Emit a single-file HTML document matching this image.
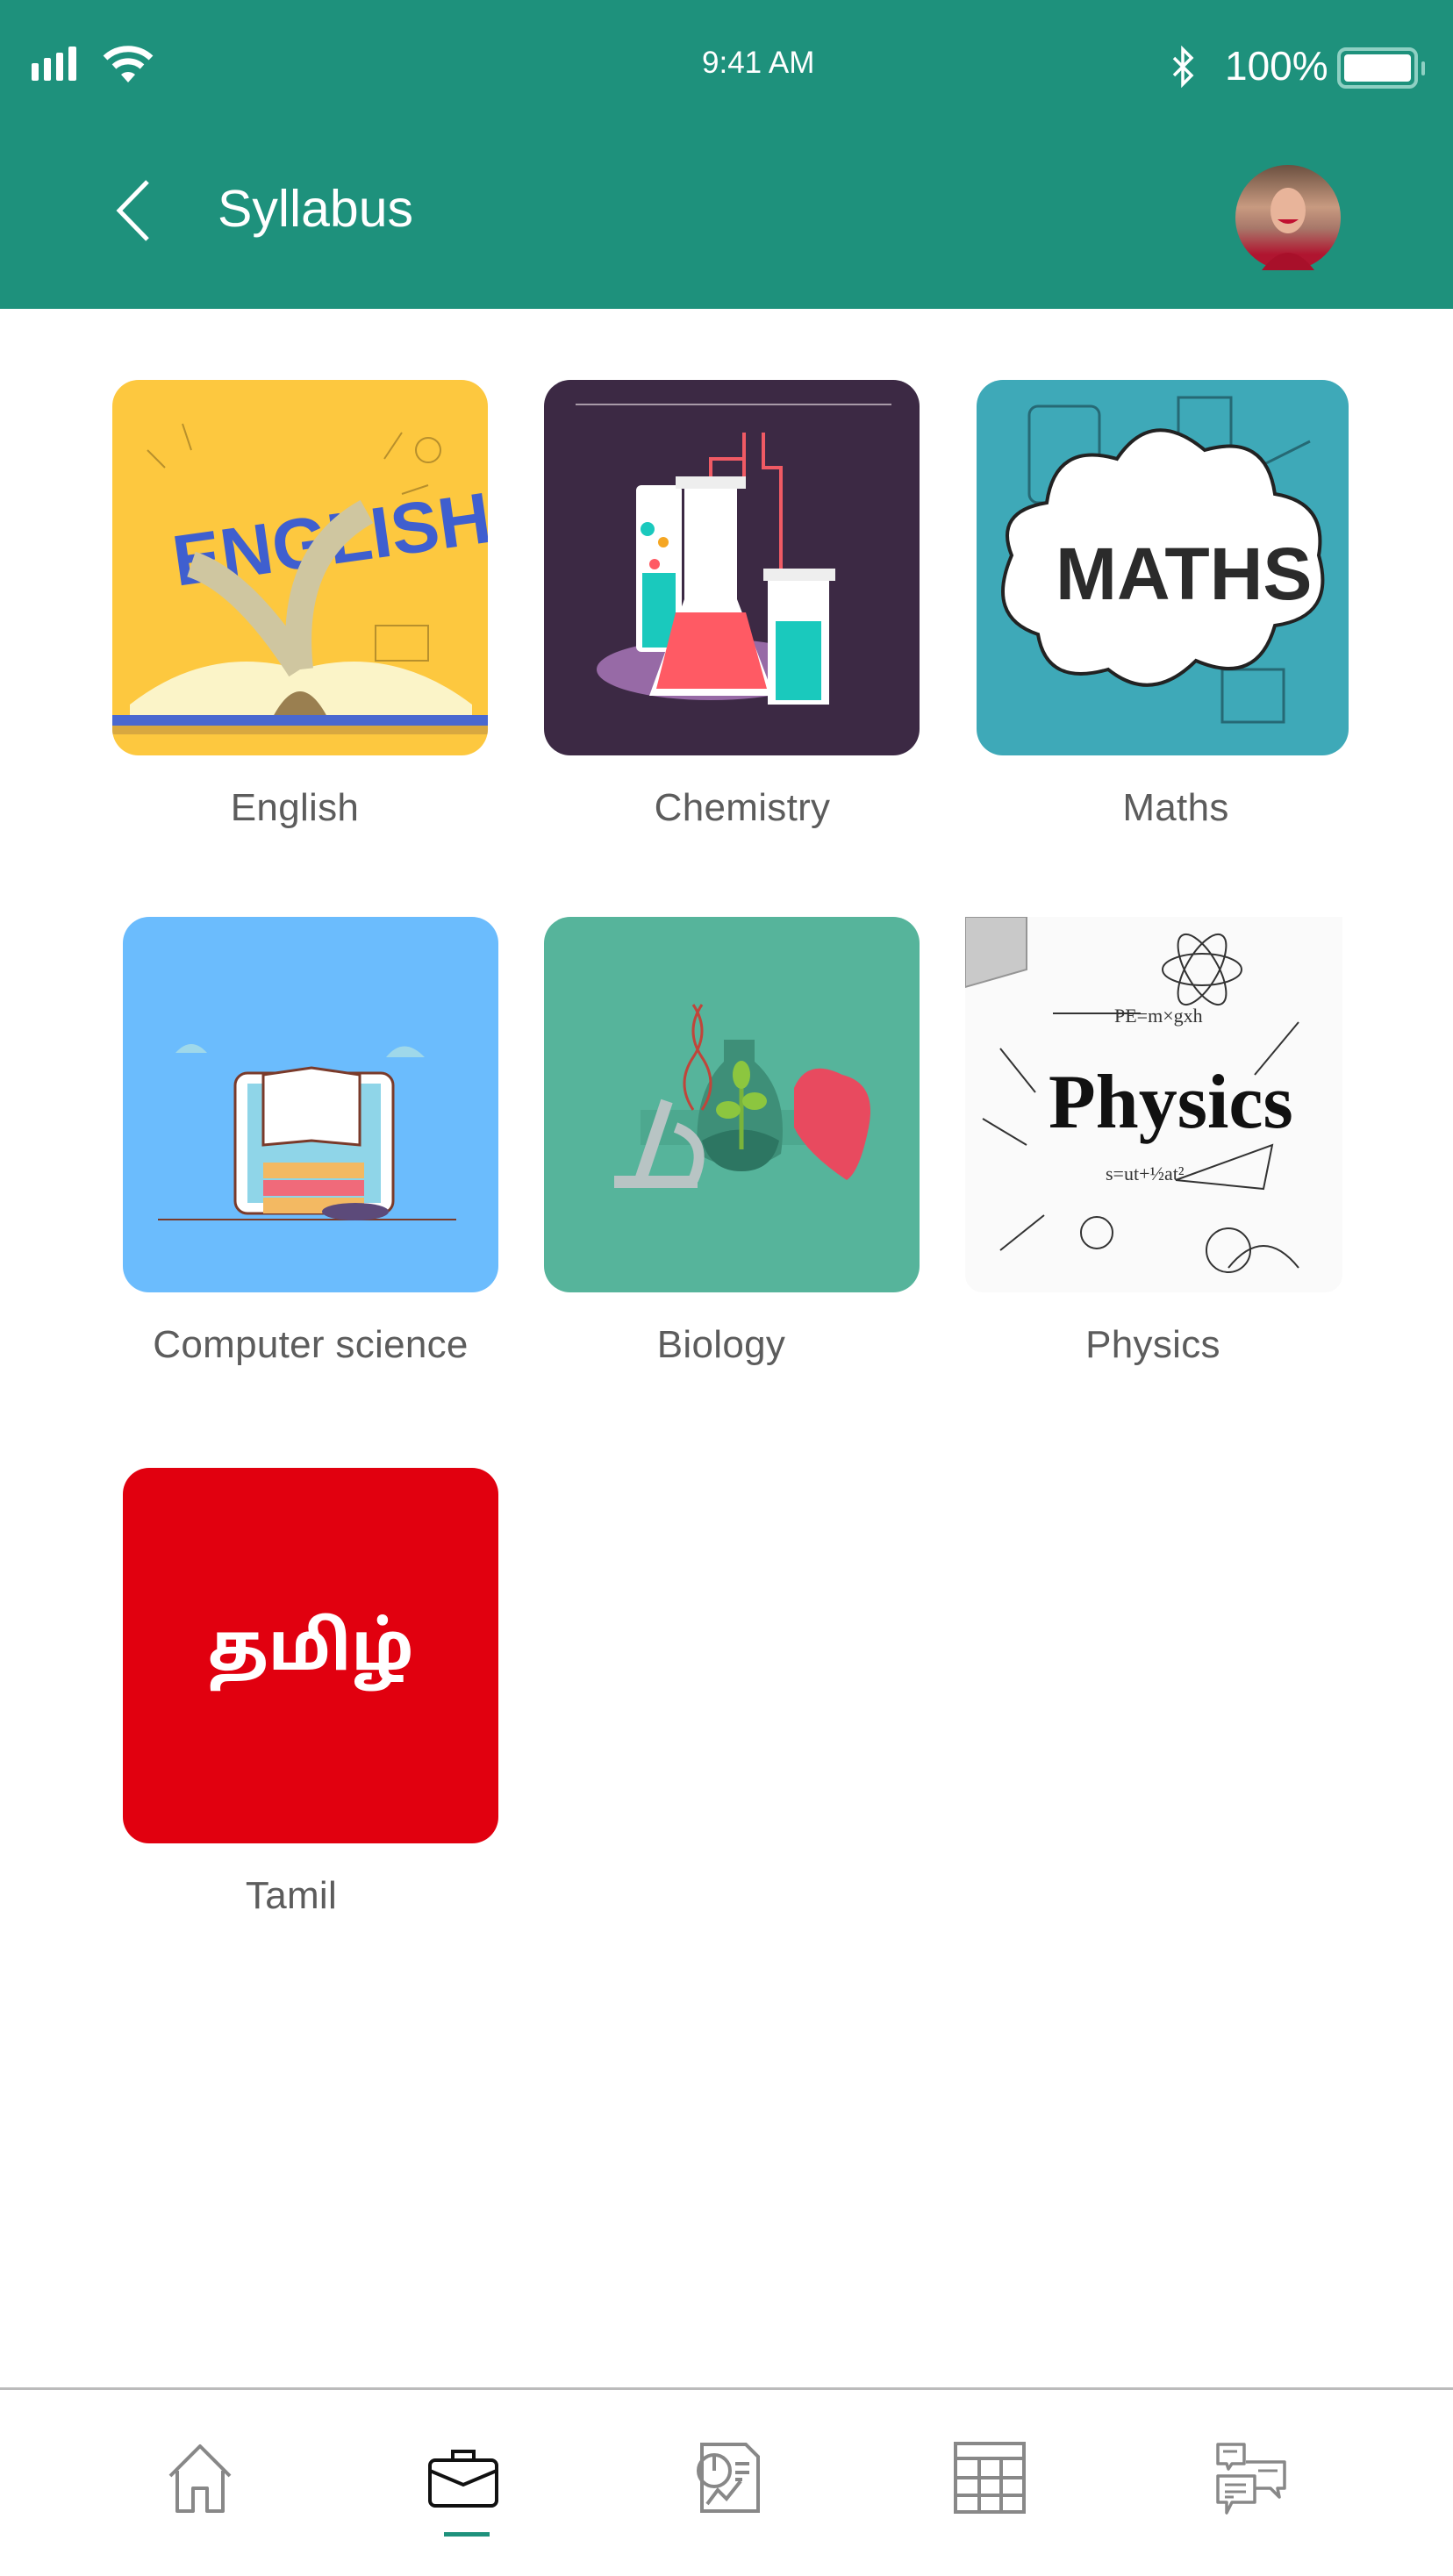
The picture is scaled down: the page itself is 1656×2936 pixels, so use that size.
<!DOCTYPE html>
<html><head><meta charset="utf-8">
<style>
*{margin:0;padding:0;box-sizing:border-box}
html,body{width:1656px;height:2936px;background:#fff;overflow:hidden;font-family:"Liberation Sans",sans-serif;position:relative}
.hdr{position:absolute;left:0;top:0;width:1656px;height:352px;background:#1e917c}
.abs{position:absolute}
.tile{position:absolute;width:428px;height:428px;border-radius:30px;overflow:hidden}
.lbl{position:absolute;font-size:44px;color:#5c5c5c;text-align:center;width:500px;letter-spacing:0.3px}
</style></head><body>
<div class="hdr">
  <div class="abs" style="left:36px;top:72px;width:8px;height:20px;background:#fff;border-radius:2px"></div>
  <div class="abs" style="left:50px;top:66px;width:8px;height:26px;background:#fff;border-radius:2px"></div>
  <div class="abs" style="left:64px;top:60px;width:8px;height:32px;background:#fff;border-radius:2px"></div>
  <div class="abs" style="left:78px;top:53px;width:9px;height:39px;background:#fff;border-radius:2px"></div>
  <svg class="abs" style="left:116px;top:52px" width="60" height="44" viewBox="0 0 60 44"><path d="M4 14 A38 38 0 0 1 56 14" stroke="#fff" stroke-width="7" fill="none"/><path d="M14 24 A24 24 0 0 1 46 24" stroke="#fff" stroke-width="7" fill="none"/><path d="M22 33 L30 42 L38 33 A12 12 0 0 0 22 33Z" fill="#fff"/></svg>
  <div class="abs" style="left:800px;top:52px;font-size:35px;color:#fff">9:41 AM</div>
  <svg class="abs" style="left:1333px;top:52px" width="30" height="50" viewBox="0 0 30 50"><path d="M5 14 L25 34 L15 44 L15 4 L25 14 L5 34" stroke="#fff" stroke-width="3.5" fill="none"/></svg>
  <div class="abs" style="left:1396px;top:48px;font-size:46px;color:#fff">100%</div>
  <div class="abs" style="left:1524px;top:54px;width:92px;height:47px;border:4px solid #8fd0c3;border-radius:10px"></div>
  <div class="abs" style="left:1532px;top:62px;width:76px;height:31px;background:#fff;border-radius:4px"></div>
  <div class="abs" style="left:1620px;top:70px;width:4px;height:16px;background:#8fd0c3;border-radius:2px"></div>
  <svg class="abs" style="left:130px;top:203px" width="44" height="74" viewBox="0 0 44 74"><path d="M38 4 L6 37 L38 70" stroke="#fff" stroke-width="5" fill="none"/></svg>
  <div class="abs" style="left:248px;top:204px;font-size:59px;color:#fff">Syllabus</div>
  <div class="abs" style="left:1408px;top:188px;width:120px;height:120px;border-radius:50%;background:linear-gradient(180deg,#6b5040 0%,#c89a80 40%,#a8786a 60%,#b01530 85%)"></div>
  <svg class="abs" style="left:1408px;top:188px" width="120" height="120"><ellipse cx="60" cy="52" rx="20" ry="26" fill="#e8b49a"/><path d="M48 62 Q60 72 72 62" fill="#c01030"/><path d="M30 120 Q60 80 90 120Z" fill="#a8102a"/></svg>
</div>

<div class="tile" style="left:128px;top:433px;background:#fdc83f">
  <svg width="428" height="428"><g stroke="#8a6a20" stroke-width="2" fill="none" opacity=".6"><path d="M40 80 l20 20 M80 50 l10 30 M330 60 l-20 30 M360 120 l-30 10"/><circle cx="360" cy="80" r="14"/><rect x="300" y="280" width="60" height="40"/></g>
  <text x="70" y="215" font-family="Liberation Sans" font-weight="bold" font-size="82" fill="#3f5fcf" transform="rotate(-8 214 200)">ENGLISH</text>
  <path d="M20 370 Q110 300 214 330 Q318 300 410 370 L410 390 L20 390Z" fill="#fbf4c8"/>
  <path d="M214 330 Q200 200 290 150 M214 330 Q150 230 90 210" stroke="#cfc6a0" stroke-width="30" fill="none"/>
  <path d="M180 390 Q214 320 248 390Z" fill="#9a7f50"/>
  <rect x="0" y="382" width="428" height="12" fill="#4a68d0"/><rect x="0" y="394" width="428" height="10" fill="#d8a840"/></svg>
</div>
<div class="lbl" style="left:86px;top:896px">English</div>

<div class="tile" style="left:620px;top:433px;background:#3c2944">
  <svg width="428" height="428"><line x1="36" y1="28" x2="396" y2="28" stroke="#a89aa8" stroke-width="2"/>
  <ellipse cx="190" cy="330" rx="130" ry="35" fill="#976aa6"/>
  <path d="M190 120 L190 90 L228 90 L228 120" stroke="#f05a64" stroke-width="4" fill="none"/><path d="M228 60 L228 90 M250 60 L250 100 L270 100 L270 220" stroke="#f05a64" stroke-width="4" fill="none"/>
  <rect x="105" y="120" width="52" height="190" rx="6" fill="#fff"/><rect x="112" y="220" width="38" height="85" fill="#1ac9bd"/>
  <rect x="255" y="220" width="70" height="150" fill="#fff"/><rect x="264" y="275" width="52" height="90" fill="#1ac9bd"/>
  <path d="M160 120 L220 120 L220 250 L262 360 L120 360 L160 250Z" fill="#fff"/><path d="M150 265 L230 265 L254 352 L128 352Z" fill="#ff5a64"/>
  <rect x="150" y="110" width="80" height="14" fill="#eee"/><rect x="250" y="215" width="82" height="14" fill="#eee"/>
  <circle cx="118" cy="170" r="8" fill="#1ac9bd"/><circle cx="136" cy="185" r="6" fill="#f5a623"/><circle cx="126" cy="210" r="6" fill="#ff5a64"/></svg>
</div>
<div class="lbl" style="left:596px;top:896px">Chemistry</div>

<div class="tile" style="left:1113px;top:433px;width:424px;background:#3ea9b8">
  <svg width="424" height="428"><g stroke="#1c4f58" stroke-width="3" fill="none" opacity=".7"><rect x="60" y="30" width="80" height="110" rx="10"/><rect x="230" y="20" width="60" height="100"/><path d="M300 110 L380 70"/><rect x="280" y="330" width="70" height="60"/></g>
  <path d="M40 200 Q20 150 80 140 Q90 70 160 90 Q200 30 260 80 Q330 60 340 130 Q400 140 390 200 Q410 270 340 280 Q320 350 250 320 Q200 370 150 330 Q80 350 70 290 Q10 270 40 200Z" fill="#fff" stroke="#222" stroke-width="4"/>
  <text x="90" y="250" font-family="Liberation Sans" font-weight="bold" font-size="84" fill="#2b2b2b">MATHS</text></svg>
</div>
<div class="lbl" style="left:1090px;top:896px">Maths</div>

<div class="tile" style="left:140px;top:1045px;background:#6bbcfd">
  <svg width="428" height="428"><rect x="128" y="178" width="180" height="160" rx="14" fill="#fff" stroke="#7a3a2a" stroke-width="3"/><rect x="142" y="190" width="152" height="136" fill="#8fd5e8"/>
  <rect x="160" y="280" width="115" height="18" fill="#f3b962"/><rect x="160" y="300" width="115" height="18" fill="#f06a7a"/><rect x="160" y="320" width="115" height="18" fill="#f3b962"/>
  <path d="M160 180 L215 172 L270 180 L270 260 L215 255 L160 260Z" fill="#fff" stroke="#7a3a2a" stroke-width="3"/>
  <line x1="40" y1="345" x2="380" y2="345" stroke="#7a3a2a" stroke-width="2"/><path d="M60 155 q18 -20 36 0z M300 160 q20 -25 44 0z" fill="#9fd8ea"/><ellipse cx="265" cy="336" rx="38" ry="10" fill="#5c4a7a"/></svg>
</div>
<div class="lbl" style="left:104px;top:1508px">Computer science</div>

<div class="tile" style="left:620px;top:1045px;background:#56b49b">
  <svg width="428" height="428"><path d="M110 220 L300 220 L300 260 L110 260Z" fill="#4da88f"/>
  <path d="M175 270 Q170 200 205 165 L205 140 L240 140 L240 165 Q280 200 270 270 Q225 300 175 270Z" fill="#3e8f78"/><path d="M180 255 Q225 230 268 255 Q260 290 225 290 Q190 290 180 255Z" fill="#2d7662"/>
  <path d="M225 265 L225 180" stroke="#7ab43a" stroke-width="5"/><ellipse cx="210" cy="220" rx="14" ry="10" fill="#8cc63f"/><ellipse cx="240" cy="210" rx="14" ry="10" fill="#8cc63f"/><ellipse cx="225" cy="180" rx="10" ry="16" fill="#8cc63f"/>
  <path d="M285 195 Q300 160 340 180 Q380 190 370 240 Q360 290 345 300 Q300 270 285 240Z" fill="#e84a5f"/>
  <rect x="80" y="295" width="95" height="14" fill="#b8c4c4"/><path d="M110 300 L140 210" stroke="#b8c4c4" stroke-width="14"/><path d="M150 240 Q190 255 170 300" stroke="#b8c4c4" stroke-width="12" fill="none"/>
  <path d="M170 100 Q190 130 170 160 Q150 190 170 220 M180 100 Q160 130 180 160 Q200 190 180 220" stroke="#c0453a" stroke-width="3" fill="none"/></svg>
</div>
<div class="lbl" style="left:572px;top:1508px">Biology</div>

<div class="tile" style="left:1100px;top:1045px;width:430px;border-radius:0 0 20px 20px;background:#fafafa">
  <svg width="430" height="428"><g stroke="#333" stroke-width="2" fill="none"><path d="M0 0 L70 0 L70 60 L0 80Z" fill="#999" opacity=".5"/><ellipse cx="270" cy="60" rx="45" ry="18"/><ellipse cx="270" cy="60" rx="45" ry="18" transform="rotate(60 270 60)"/><ellipse cx="270" cy="60" rx="45" ry="18" transform="rotate(-60 270 60)"/>
  <path d="M100 110 L200 110 M40 150 L80 200 M20 230 L70 260 M330 180 L380 120 M240 300 L350 260 L340 310Z M40 380 L90 340 M300 400 Q340 350 380 400"/><circle cx="150" cy="360" r="18"/><circle cx="300" cy="380" r="25"/></g>
  <text x="95" y="240" font-family="Liberation Serif" font-weight="bold" font-size="88" fill="#111">Physics</text>
  <text x="170" y="120" font-family="Liberation Serif" font-size="22" fill="#333">PE=m×gxh</text>
  <text x="160" y="300" font-family="Liberation Serif" font-size="22" fill="#333">s=ut+½at²</text></svg>
</div>
<div class="lbl" style="left:1064px;top:1508px">Physics</div>

<div class="tile" style="left:140px;top:1673px;background:#e1000f">
  <div style="position:absolute;left:0;top:159px;width:428px;text-align:center;font-size:76px;line-height:1.2;font-weight:bold;color:#fff;font-family:'Liberation Sans','Noto Sans Tamil','Lohit Tamil',sans-serif">தமிழ்</div>
</div>
<div class="lbl" style="left:82px;top:2136px">Tamil</div>

<div class="abs" style="left:0;top:2721px;width:1656px;height:3px;background:#bbb"></div>
<svg class="abs" style="left:188px;top:2782px" width="80" height="84" viewBox="0 0 80 84"><path d="M6 40 L40 6 L74 40 M14 34 L14 80 L32 80 L32 54 L48 54 L48 80 L66 80 L66 34" stroke="#888" stroke-width="4" fill="none" stroke-linejoin="round"/></svg>
<svg class="abs" style="left:486px;top:2788px" width="84" height="72" viewBox="0 0 84 72"><rect x="4" y="16" width="76" height="52" rx="6" stroke="#111" stroke-width="4" fill="none"/><path d="M30 16 L30 6 L54 6 L54 16 M4 28 L42 44 L80 28" stroke="#111" stroke-width="4" fill="none"/></svg>
<div class="abs" style="left:506px;top:2886px;width:52px;height:5px;background:#1e917c"></div>
<svg class="abs" style="left:788px;top:2782px" width="82" height="84" viewBox="0 0 82 84"><path d="M12 4 L62 4 L76 18 L76 80 L12 80Z" stroke="#888" stroke-width="4" fill="none"/><circle cx="26" cy="34" r="18" stroke="#888" stroke-width="4" fill="none"/><path d="M26 34 L26 16 M50 26 L66 26 M50 36 L66 36 M50 44 L58 44 M18 72 L30 56 L40 66 L56 46" stroke="#888" stroke-width="4" fill="none"/></svg>
<svg class="abs" style="left:1086px;top:2782px" width="84" height="84" viewBox="0 0 84 84"><rect x="3" y="3" width="78" height="78" stroke="#888" stroke-width="4" fill="none"/><path d="M3 20 L81 20 M3 42 L81 42 M3 62 L81 62 M30 20 L30 81 M55 20 L55 81" stroke="#888" stroke-width="4"/></svg>
<svg class="abs" style="left:1384px;top:2782px" width="86" height="84" viewBox="0 0 86 84"><path d="M4 4 L34 4 L34 26 L20 26 L16 32 L14 26 L4 26Z M36 24 L80 24 L80 54 L72 54 L74 64 L64 54 L46 54 M4 40 L46 40 L46 70 L20 70 L14 82 L14 70 L4 70Z" stroke="#888" stroke-width="3.5" fill="#fff" stroke-linejoin="round"/><path d="M12 50 L36 50 M12 58 L36 58 M12 64 L22 64 M50 34 L72 34 M10 12 L26 12" stroke="#888" stroke-width="3"/></svg>
</body></html>
